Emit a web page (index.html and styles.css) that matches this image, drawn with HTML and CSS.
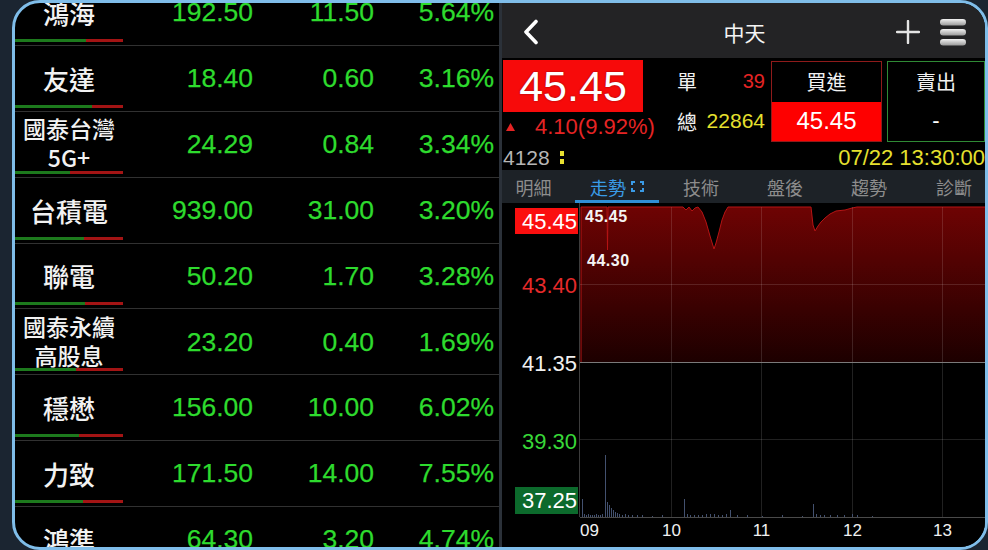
FILE: index.html
```html
<!DOCTYPE html>
<html lang="zh-Hant">
<head>
<meta charset="utf-8">
<title>中天</title>
<link rel="stylesheet" href="styles.css">
</head>
<body>
<div class="frame">
  <div class="list">
    <div class="row">
      <div class="name-cell"><div class="name">鴻海</div><div class="bar"><span class="up" style="width:71px"></span><span class="dn"></span></div></div>
      <div class="num">192.50</div><div class="num">11.50</div><div class="num">5.64%</div>
    </div>
    <div class="row">
      <div class="name-cell"><div class="name">友達</div><div class="bar"><span class="up" style="width:77px"></span><span class="dn"></span></div></div>
      <div class="num">18.40</div><div class="num">0.60</div><div class="num">3.16%</div>
    </div>
    <div class="row">
      <div class="name-cell"><div class="name two"><span>國泰台灣</span><span>5G+</span></div><div class="bar"><span class="up" style="width:55px"></span><span class="dn"></span></div></div>
      <div class="num">24.29</div><div class="num">0.84</div><div class="num">3.34%</div>
    </div>
    <div class="row">
      <div class="name-cell"><div class="name">台積電</div><div class="bar"><span class="up" style="width:69px"></span><span class="dn"></span></div></div>
      <div class="num">939.00</div><div class="num">31.00</div><div class="num">3.20%</div>
    </div>
    <div class="row">
      <div class="name-cell"><div class="name">聯電</div><div class="bar"><span class="up" style="width:70px"></span><span class="dn"></span></div></div>
      <div class="num">50.20</div><div class="num">1.70</div><div class="num">3.28%</div>
    </div>
    <div class="row">
      <div class="name-cell"><div class="name two"><span>國泰永續</span><span>高股息</span></div><div class="bar"><span class="up" style="width:61px"></span><span class="dn"></span></div></div>
      <div class="num">23.20</div><div class="num">0.40</div><div class="num">1.69%</div>
    </div>
    <div class="row">
      <div class="name-cell"><div class="name">穩懋</div><div class="bar"><span class="up" style="width:64px"></span><span class="dn"></span></div></div>
      <div class="num">156.00</div><div class="num">10.00</div><div class="num">6.02%</div>
    </div>
    <div class="row">
      <div class="name-cell"><div class="name">力致</div><div class="bar"><span class="up" style="width:68px"></span><span class="dn"></span></div></div>
      <div class="num">171.50</div><div class="num">14.00</div><div class="num">7.55%</div>
    </div>
    <div class="row">
      <div class="name-cell"><div class="name">鴻準</div><div class="bar"><span class="up" style="width:66px"></span><span class="dn"></span></div></div>
      <div class="num">64.30</div><div class="num">3.20</div><div class="num">4.74%</div>
    </div>
  </div>

  <div class="divider"></div>

  <div class="detail">
    <div class="nav">
      <div class="nav-left">
        <svg class="chev" width="16" height="26" viewBox="0 0 16 26"><polyline points="13,2.5 3,13 13,23.5" fill="none" stroke="#fff" stroke-width="3.6" stroke-linecap="round" stroke-linejoin="round"/></svg>
      </div>
      <div class="title">中天</div>
      <div class="nav-right">
        <svg width="24" height="24" viewBox="0 0 24 24"><path d="M12 1V23M1 12H23" stroke="#e4e4e4" stroke-width="2.4" stroke-linecap="round"/></svg>
        <svg width="26" height="27" viewBox="0 0 26 27">
          <defs><linearGradient id="mg" x1="0" y1="0" x2="0" y2="1"><stop offset="0" stop-color="#f2f2f2"/><stop offset="1" stop-color="#9a9a9a"/></linearGradient></defs>
          <rect x="0" y="0" width="26" height="6.5" rx="3.2" fill="url(#mg)"/>
          <rect x="0" y="10" width="26" height="6.5" rx="3.2" fill="url(#mg)"/>
          <rect x="0" y="20" width="26" height="6.5" rx="3.2" fill="url(#mg)"/>
        </svg>
      </div>
    </div>

    <div class="quote">
      <div class="q-top">
        <div class="price-col">
          <div class="big">45.45</div>
          <div class="chg">
            <svg width="9" height="8" viewBox="0 0 9 8"><polygon points="4.5,0 9,8 0,8" fill="#e52424"/></svg>
            <span class="chg-txt">4.10(9.92%)</span>
          </div>
        </div>
        <div class="stats">
          <div class="stat"><span class="lab">單</span><span class="red">39</span></div>
          <div class="stat"><span class="lab">總</span><span class="yel">22864</span></div>
        </div>
        <div class="buy">
          <div class="box-lbl">買進</div>
          <div class="box-val">45.45</div>
        </div>
        <div class="sell">
          <div class="box-lbl">賣出</div>
          <div class="box-val dash">-</div>
        </div>
      </div>
      <div class="q-bottom">
        <div class="vol">4128
          <svg class="updown" width="4" height="13" viewBox="0 0 4 13"><rect x="0" y="0" width="4" height="5" fill="#e8e030"/><rect x="0" y="8" width="4" height="5" fill="#e8e030"/></svg>
        </div>
        <div class="time">07/22 13:30:00</div>
      </div>
    </div>

    <div class="tabs">
      <div class="tab first">明細</div>
      <div class="tab active">走勢
        <svg class="expand" width="13" height="11" viewBox="0 0 13 11"><path d="M1 4V1H4M9 1H12V4M12 7V10H9M4 10H1V7" fill="none" stroke="#3a9be6" stroke-width="2"/></svg>
      </div>
      <div class="tab">技術</div>
      <div class="tab">盤後</div>
      <div class="tab">趨勢</div>
      <div class="tab last">診斷</div>
    </div>

    <div class="chart">
      <svg class="chart-svg" width="483" height="344" viewBox="0 0 483 344">
        <defs>
          <linearGradient id="rg" x1="0" y1="4" x2="0" y2="159" gradientUnits="userSpaceOnUse">
            <stop offset="0" stop-color="#6e0303"/>
            <stop offset="1" stop-color="#1d0000"/>
          </linearGradient>
        </defs>
        <path fill="url(#rg)" d="M79,159 L79,4 L105,4 L105.5,47 L106,4 L181,4 L184,7 L187,4 L190,8 L193,5 L196,4 L200,9 L204,19 L208,33 L212,46 L214,40 L217,29 L220,17 L223,9 L226,4 L309,4 L311,22 L313,28 L316,23 L319,19 L323,15 L328,11 L334,8 L343,7 L350,5 L355,4 L485,4 L485,159 Z"/>
        <path fill="none" stroke="#b51414" stroke-width="1" d="M79,159 L79,4 L105,4 L105.5,47 L106,4 L181,4 L184,7 L187,4 L190,8 L193,5 L196,4 L200,9 L204,19 L208,33 L212,46 L214,40 L217,29 L220,17 L223,9 L226,4 L309,4 L311,22 L313,28 L316,23 L319,19 L323,15 L328,11 L334,8 L343,7 L350,5 L355,4 L485,4"/>
        <g stroke="rgba(255,255,255,0.13)" stroke-width="1">
          <line x1="78" y1="81.5" x2="483" y2="81.5"/>
          <line x1="78" y1="236.5" x2="483" y2="236.5"/>
          <line x1="169.5" y1="4" x2="169.5" y2="314"/>
          <line x1="259.5" y1="4" x2="259.5" y2="314"/>
          <line x1="350.5" y1="4" x2="350.5" y2="314"/>
          <line x1="440.5" y1="4" x2="440.5" y2="314"/>
        </g>
        <line x1="77.5" y1="0" x2="77.5" y2="314" stroke="#3c3c3c"/>
        <line x1="78" y1="159.5" x2="483" y2="159.5" stroke="#7a7a7a"/>
        <line x1="78" y1="314.5" x2="483" y2="314.5" stroke="#4a4a4a"/>
        <path stroke="#43516f" stroke-width="1" fill="none" d="M80.5,314V296 M82.5,314V311 M84.5,314V312 M86.5,314V311 M88.5,314V312 M90.5,314V312 M92.5,314V312 M94.5,314V311 M96.5,314V312 M98.5,314V312 M100.5,314V311 M103.5,314V252 M105.5,314V299 M107.5,314V302 M109.5,314V305 M111.5,314V307 M113.5,314V309 M115.5,314V310 M117.5,314V311 M120.5,314V312 M123.5,314V311 M126.5,314V312 M130.5,314V312 M135.5,314V312 M140.5,314V312 M150.5,314V313 M160.5,314V312 M182.5,314V296 M185.5,314V311 M188.5,314V312 M192.5,314V312 M196.5,314V312 M200.5,314V312 M204.5,314V311 M208.5,314V311 M212.5,314V311 M216.5,314V312 M220.5,314V312 M224.5,314V311 M228.5,314V307 M235.5,314V312 M245.5,314V312 M260.5,314V313 M280.5,314V312 M300.5,314V313 M311.5,314V301 M314.5,314V311 M318.5,314V312 M322.5,314V312 M328.5,314V312 M335.5,314V312 M342.5,314V312 M350.5,314V311 M355.5,314V312 M370.5,314V313"/>

        <rect x="13" y="5" width="63" height="26" fill="#fb0f0f"/>
        <text class="ax" x="75" y="25.5" fill="#ffffff">45.45</text>
        <text class="ax" x="75" y="89.5" fill="#e52a2a">43.40</text>
        <text class="ax" x="75" y="167.5" fill="#f0f0f0">41.35</text>
        <text class="ax" x="75" y="245.5" fill="#38d838">39.30</text>
        <rect x="13" y="284" width="63" height="27" fill="#0c6a2c"/>
        <text class="ax" x="75" y="305" fill="#ffffff">37.25</text>

        <text class="hl" x="83" y="18.5">45.45</text>
        <text class="hl" x="85" y="62.5">44.30</text>

        <text class="xl" x="78" y="333">09</text>
        <text class="xl mid" x="169.5" y="333">10</text>
        <text class="xl mid" x="259.5" y="333">11</text>
        <text class="xl mid" x="350.5" y="333">12</text>
        <text class="xl mid" x="440.5" y="333">13</text>
      </svg>
    </div>
  </div>
</div>
</body>
</html>
```
FILE: styles.css
```css
* { box-sizing: border-box; }
html, body { margin: 0; padding: 0; }
body {
  width: 988px;
  height: 550px;
  overflow: hidden;
  background: #1b2531;
  font-family: "Liberation Sans", "Noto Sans CJK TC", sans-serif;
}
.frame {
  margin-left: 12px;
  width: 976px;
  height: 550px;
  border: 3px solid #7fbde9;
  border-radius: 28px;
  overflow: hidden;
  display: flex;
  align-items: flex-start;
  background: #000;
}

/* ---------- left list ---------- */
.list {
  width: 484px;
  flex: none;
  margin-top: -22.85px;
}
.row {
  display: grid;
  grid-template-columns: 108px 130px 121px 120px;
  grid-template-rows: 64.85px;
  height: 65.85px;
  border-bottom: 1px solid #313131;
  align-items: center;
}
.name-cell {
  align-self: stretch;
  display: flex;
  flex-direction: column;
  padding-top: 7px;
  min-height: 0;
}
.name {
  flex: 1;
  min-height: 0;
  display: flex;
  align-items: center;
  justify-content: center;
  text-align: center;
  color: #f2f2f2;
  font-family: "Noto Sans CJK TC", sans-serif;
  font-weight: 500;
  font-size: 26px;
  line-height: 1;
}
.name.two {
  flex-direction: column;
  font-size: 23px;
  margin-top: -3px;
}
.name.two span { display: block; height: 29px; line-height: 29px; flex: none; }
.bar {
  height: 3px;
  flex: none;
  margin-bottom: 3px;
  display: flex;
}
.bar .up { background: #1d7a1d; }
.bar .dn { flex: 1; background: #a31414; }
.num {
  text-align: right;
  color: #2edb2e;
  font-size: 26.5px;
  line-height: 1;
  -webkit-text-stroke: 0.25px #2edb2e;
}

.divider {
  width: 3px;
  height: 550px;
  flex: none;
  background: #2b3139;
}

/* ---------- right detail ---------- */
.detail {
  width: 483px;
  height: 544px;
  flex: none;
  display: flex;
  flex-direction: column;
}
.nav {
  height: 55px;
  flex: none;
  background: #232325;
  display: grid;
  grid-template-columns: 1fr auto 1fr;
  align-items: center;
  padding: 3px 19px 0 21px;
}
.nav-left { display: flex; align-items: center; }
.chev { display: block; }
.title {
  color: #f4f4f4;
  font-family: "Noto Sans CJK TC", sans-serif;
  font-size: 21px;
}
.nav-right {
  justify-self: end;
  display: flex;
  align-items: center;
  gap: 20px;
}
.nav-right svg { display: block; flex: none; }

.quote {
  height: 112px;
  flex: none;
  background: #000;
  display: flex;
  flex-direction: column;
}
.q-top {
  display: flex;
  height: 87px;
}
.price-col {
  width: 141px;
  flex: none;
  padding-left: 1px;
  padding-top: 2px;
}
.big {
  height: 52px;
  background: #f70a0a;
  color: #fff;
  font-size: 43px;
  display: flex;
  align-items: center;
  justify-content: center;
  text-shadow: 0 0 2px rgba(0,0,0,0.45);
}
.chg {
  height: 30px;
  display: flex;
  align-items: center;
  padding-left: 3px;
  white-space: nowrap;
}
.chg svg { display: block; flex: none; }
.chg-txt {
  flex: none;
  margin-left: 20px;
  color: #e52424;
  font-size: 22px;
}
.stats {
  width: 88px;
  margin-left: 34px;
  flex: none;
  padding-top: 3px;
}
.stat {
  height: 40px;
  display: flex;
  align-items: center;
  justify-content: space-between;
  font-size: 20px;
}
.lab {
  color: #f0f0f0;
  font-family: "Noto Sans CJK TC", sans-serif;
  font-size: 20px;
}
.red { color: #e52424; }
.yel { color: #e6e02e; font-size: 21px; }
.buy, .sell {
  margin-top: 3px;
  height: 81px;
  display: flex;
  flex-direction: column;
}
.buy {
  width: 111px;
  flex: none;
  margin-left: 6px;
  border: 1px solid #8f1b1b;
}
.sell {
  flex: 1;
  margin-left: 5px;
  border: 1px solid #2f8a35;
}
.box-lbl {
  flex: 1;
  display: flex;
  align-items: center;
  justify-content: center;
  color: #f2f2f2;
  font-family: "Noto Sans CJK TC", sans-serif;
  font-size: 20px;
}
.box-val {
  flex: 1;
  display: flex;
  align-items: center;
  justify-content: center;
  color: #fff;
  font-size: 24px;
}
.buy .box-val { background: #fe0000; }
.box-val.dash { font-size: 22px; }
.q-bottom {
  height: 25px;
  display: flex;
  align-items: center;
  justify-content: space-between;
  padding-left: 1px;
}
.vol {
  display: flex;
  align-items: center;
  color: #b6b6b6;
  font-size: 21px;
}
.updown { display: block; flex: none; margin-left: 10px; }
.time {
  color: #e6e02e;
  font-size: 22px;
  white-space: nowrap;
}

.tabs {
  height: 33px;
  flex: none;
  background: #1d2227;
  display: grid;
  grid-template-columns: 73px 84px 84px 84px 84px 74px;
}
.tab {
  display: flex;
  align-items: center;
  justify-content: center;
  color: #8d8d8d;
  font-family: "Noto Sans CJK TC", sans-serif;
  font-size: 18px;
}
.tab.first { padding-right: 10px; }
.tab.last { padding-left: 12px; }
.tab.active {
  color: #3a9be6;
  box-shadow: inset 0 -3px 0 #2f8fd6;
}
.expand { display: block; flex: none; margin-left: 5px; }

.chart {
  flex: 1;
  background: #000;
}
.chart-svg { display: block; }
.ax {
  font-family: "Liberation Sans", sans-serif;
  font-size: 22px;
  text-anchor: end;
}
.hl {
  font-family: "Liberation Sans", sans-serif;
  font-size: 16px;
  font-weight: bold;
  letter-spacing: 0.5px;
  fill: #f4f4f4;
}
.xl {
  font-family: "Liberation Sans", sans-serif;
  font-size: 17px;
  fill: #f0f0f0;
}
.xl.mid { text-anchor: middle; }
```
